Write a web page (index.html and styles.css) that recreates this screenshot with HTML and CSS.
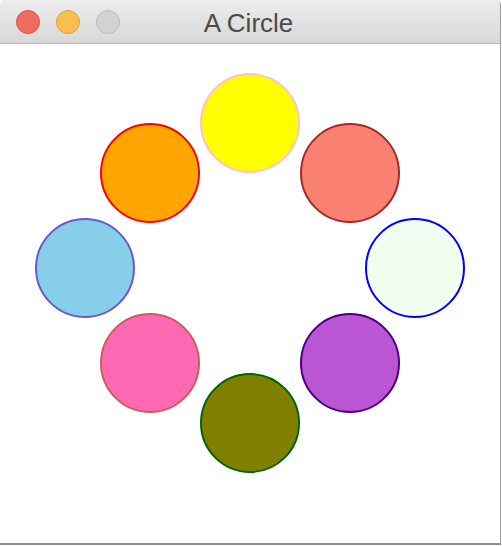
FILE: index.html
```html
<!DOCTYPE html>
<html>
<head>
<meta charset="utf-8">
<title>A Circle</title>
<link rel="stylesheet" href="styles.css">
</head>
<body>
<div class="window">
  <div class="titlebar">
    <div class="lights">
      <span class="light close"></span>
      <span class="light minimize"></span>
      <span class="light zoom"></span>
    </div>
    <div class="title">A Circle</div>
    <div class="spacer"></div>
  </div>
  <div class="content">
    <svg class="canvas" width="500" height="499" viewBox="0 44 500 499" xmlns="http://www.w3.org/2000/svg">
      <circle cx="250" cy="123" r="49" fill="#ffff00" stroke="#ffc0cb" stroke-width="2"/>
      <circle cx="350" cy="173" r="49" fill="#fa8072" stroke="#a52a2a" stroke-width="2"/>
      <circle cx="415" cy="268" r="49" fill="#f0fff0" stroke="#0000ff" stroke-width="2"/>
      <circle cx="350" cy="363" r="49" fill="#ba55d3" stroke="#4b0082" stroke-width="2"/>
      <circle cx="250" cy="423" r="49" fill="#808000" stroke="#006400" stroke-width="2"/>
      <circle cx="150" cy="363" r="49" fill="#ff69b4" stroke="#cd5c5c" stroke-width="2"/>
      <circle cx="85" cy="268" r="49" fill="#87ceeb" stroke="#6a5acd" stroke-width="2"/>
      <circle cx="150" cy="173" r="49" fill="#ffa500" stroke="#ff0000" stroke-width="2"/>
    </svg>
  </div>
</div>
</body>
</html>
```

FILE: styles.css
```css
html, body {
  margin: 0;
  padding: 0;
  background: #ffffff;
}

.window {
  width: 500px;
  height: 543px;
  border-right: 1px solid #9c9c9c;
  border-bottom: 2px solid #8c8c8c;
  border-radius: 5px 5px 0 0;
  overflow: hidden;
  background: #ffffff;
  display: flex;
  flex-direction: column;
}

.titlebar {
  height: 43px;
  flex: none;
  display: grid;
  grid-template-columns: 1fr auto 1fr;
  align-items: center;
  background: linear-gradient(to bottom, #ececec 0%, #d8d8d8 100%);
  border-bottom: 1px solid #b9b9b9;
}

.lights {
  display: flex;
  gap: 16px;
  padding-left: 16px;
  align-items: center;
}

.light {
  width: 22px;
  height: 22px;
  border-radius: 50%;
  display: block;
}

.light.close {
  background: #ef6b60;
  border: 1px solid #d9544b;
}

.light.minimize {
  background: #f6bf50;
  border: 1px solid #dba542;
}

.light.zoom {
  background: #d3d3d3;
  border: 1px solid #bababa;
}

.title {
  font-family: "Liberation Sans", Arial, sans-serif;
  font-size: 26px;
  color: #4a4a4a;
  line-height: 1;
  padding-top: 3px;
  margin-right: 3px;
}

.content {
  flex: 1;
  display: block;
}

.canvas {
  display: block;
}
```
